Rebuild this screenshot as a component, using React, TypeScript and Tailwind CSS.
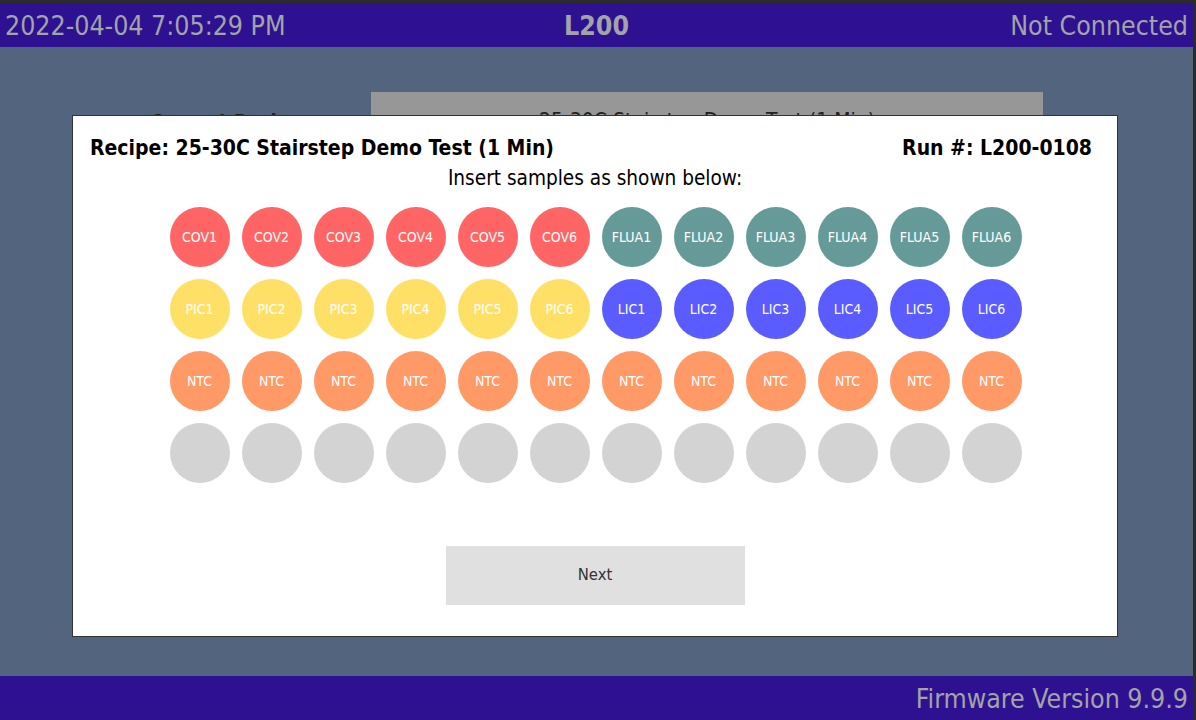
import React from "react";

const FONT = { fontFamily: '"DejaVu Sans Condensed", "DejaVu Sans", Tahoma, sans-serif' };

type Well = { label: string; color: string };

const ROWS: Well[][] = [
  [
    ...[1, 2, 3, 4, 5, 6].map((n) => ({ label: `COV${n}`, color: "bg-[#ff6565]" })),
    ...[1, 2, 3, 4, 5, 6].map((n) => ({ label: `FLUA${n}`, color: "bg-[#669a98]" })),
  ],
  [
    ...[1, 2, 3, 4, 5, 6].map((n) => ({ label: `PIC${n}`, color: "bg-[#ffe066]" })),
    ...[1, 2, 3, 4, 5, 6].map((n) => ({ label: `LIC${n}`, color: "bg-[#5b5cff]" })),
  ],
  Array.from({ length: 12 }, () => ({ label: "NTC", color: "bg-[#ff9965]" })),
  Array.from({ length: 12 }, () => ({ label: "", color: "bg-[#d3d3d3]" })),
];

function Circle({ well }: { well: Well }) {
  return (
    <div
      className={`flex h-[60px] w-[60px] items-center justify-center rounded-full text-[14px] text-white ${well.color}`}
    >
      {well.label}
    </div>
  );
}

export default function App() {
  return (
    <div style={FONT} className="flex h-[720px] w-[1196px] flex-col overflow-hidden bg-[#2b2b2b]">
      <div className="flex h-[720px] w-[1193px] flex-col pt-[3px]">
        {/* header */}
        <div className="flex h-[44px] items-center justify-between bg-[#2d1190] px-[5px] pt-[1px] text-[26.5px] text-[#a3a3a8]">
          <span className="w-[400px]">2022-04-04 7:05:29 PM</span>
          <span className="font-bold">L200</span>
          <span className="w-[400px] text-right">Not Connected</span>
        </div>

        {/* main */}
        <div className="relative flex-1 bg-[#52647e]">
          <div className="flex pt-[45px]">
            <div className="w-[371px] pl-[150px] pt-[14px] text-[20px] font-bold text-[#222]">Current Recipe:</div>
            <div className="flex h-[60px] w-[672px] items-center justify-center bg-[#979797] text-[21px] text-[#222]">
              25-30C Stairstep Demo Test (1 Min)
            </div>
          </div>

          {/* modal */}
          <div className="absolute left-[72px] top-[68px] flex h-[522px] w-[1046px] flex-col items-center border border-[#333] bg-white">
            <div className="flex w-full justify-between pl-[17px] pr-[25px] pt-[19px] text-[21px] font-bold leading-[26px] text-black">
              <span>Recipe: 25-30C Stairstep Demo Test (1 Min)</span>
              <span>Run #: L200-0108</span>
            </div>
            <div className="mt-[4px] text-[20.6px] leading-[26px] text-black">Insert samples as shown below:</div>

            <div className="mt-[16px] flex flex-col gap-[12px] pl-[1px]">
              {ROWS.map((row, r) => (
                <div key={r} className="flex gap-[12px]">
                  {row.map((w, i) => (
                    <Circle key={i} well={w} />
                  ))}
                </div>
              ))}
            </div>

            <button
              type="button"
              className="mt-[63px] h-[59px] w-[299px] bg-[#e0e0e0] text-[16.5px] text-[#333]"
            >
              Next
            </button>
          </div>
        </div>

        {/* footer */}
        <div className="flex h-[44px] items-center justify-end bg-[#2d1190] px-[5px] pt-[1px] text-[26.5px] text-[#a3a3a8]">
          Firmware Version 9.9.9
        </div>
      </div>
    </div>
  );
}
